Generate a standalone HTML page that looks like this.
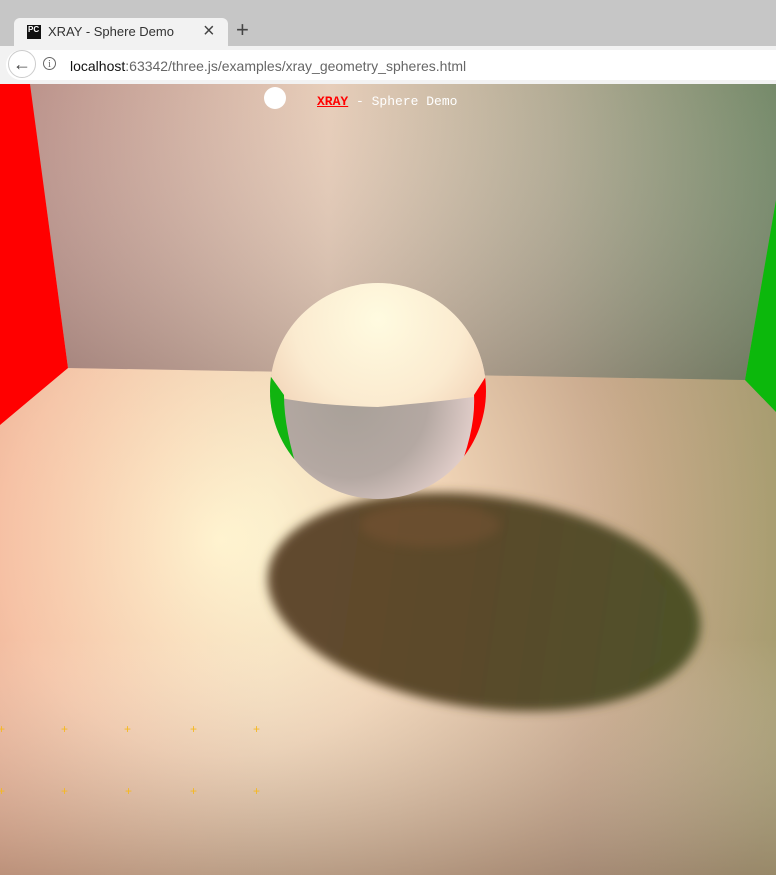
<!DOCTYPE html>
<html><head><meta charset="utf-8"><style>
html,body{margin:0;padding:0;width:776px;height:875px;overflow:hidden;background:#c6c6c6;font-family:"Liberation Sans",sans-serif}
#top{position:absolute;left:0;top:0;width:776px;height:46px;background:#c6c6c6}
#tab{position:absolute;left:14px;top:18px;width:214px;height:28px;background:#f2f2f2;border-radius:6px 6px 0 0}
#tab .ic{position:absolute;left:13px;top:7px;width:14px;height:14px;background:#111;color:#fff;font-size:8px;font-weight:bold;line-height:9px;padding-left:1px;box-sizing:border-box}
#tab .t{position:absolute;left:34px;top:6px;font-size:13px;color:#333}
#tab .x{position:absolute;left:189px;top:2px;font-size:20px;color:#444}
#plus{position:absolute;left:236px;top:17px;font-size:22px;color:#444}
#bar{position:absolute;left:0;top:46px;width:776px;height:38px;background:#f2f2f2}
#omni{position:absolute;left:6px;top:4px;width:770px;height:30px;background:#fff;border-radius:15px 0 0 15px}
#back{position:absolute;left:8px;top:50px;width:28px;height:28px;border-radius:50%;border:1px solid #ccc;background:#fff;text-align:center;line-height:26px;font-size:18px;font-weight:bold;color:#444;box-sizing:border-box}
#info{position:absolute;left:43px;top:57px;width:13px;height:13px;border:1px solid #666;border-radius:50%;font-size:10px;line-height:13px;text-align:center;color:#666;box-sizing:border-box;font-family:"Liberation Serif",serif}
#url{position:absolute;left:70px;top:58px;font-size:14px;color:#666}
#url b{font-weight:normal;color:#111}
svg{position:absolute;left:0;top:84px}
#title{position:absolute;left:317px;top:94px;font-family:"Liberation Mono",monospace;font-size:13px;color:#fff}
#title span{color:#f00;font-weight:bold;text-decoration:underline}
</style></head><body>
<div id="top"><div id="tab"><div class="ic">PC</div><div class="t">XRAY - Sphere Demo</div><div class="x">×</div></div><div id="plus">+</div></div>
<div id="bar"><div id="omni"></div></div>
<div id="back">←</div><div id="info">i</div>
<div id="url"><b>localhost</b>:63342/three.js/examples/xray_geometry_spheres.html</div>
<svg width="776" height="791" viewBox="0 84 776 791">
<defs>
<linearGradient id="wall" x1="0" x2="1" y1="0" y2="0">
<stop offset="0" stop-color="#b88e86"/><stop offset="0.4" stop-color="#e6cbb6"/><stop offset="0.7" stop-color="#b0a890"/><stop offset="1" stop-color="#6e8462"/></linearGradient>
<linearGradient id="wallv" x1="0" x2="0" y1="0" y2="1">
<stop offset="0" stop-color="#fff" stop-opacity="0.05"/><stop offset="1" stop-color="#6a5a58" stop-opacity="0.3"/></linearGradient>
<radialGradient id="floor" gradientUnits="userSpaceOnUse" cx="220" cy="540" r="620">
<stop offset="0" stop-color="#fff8d4"/><stop offset="0.35" stop-color="#f2d6b8"/><stop offset="0.7" stop-color="#c4a488"/><stop offset="1" stop-color="#9c8470"/></radialGradient>
<linearGradient id="floorl" x1="0" x2="1" y1="0" y2="0">
<stop offset="0" stop-color="#ff9a80" stop-opacity="0.35"/><stop offset="0.35" stop-color="#ffb090" stop-opacity="0"/><stop offset="0.75" stop-color="#d8d090" stop-opacity="0"/><stop offset="1" stop-color="#a8b068" stop-opacity="0.45"/></linearGradient>
<linearGradient id="floorb" x1="0" x2="0" y1="0" y2="1">
<stop offset="0" stop-color="#fff" stop-opacity="0"/><stop offset="0.7" stop-color="#fff" stop-opacity="0"/><stop offset="1" stop-color="#8a7262" stop-opacity="0.4"/></linearGradient>
<linearGradient id="shadow" x1="0" x2="1" y1="0" y2="0">
<stop offset="0" stop-color="#62482e"/><stop offset="0.5" stop-color="#5a4a2a"/><stop offset="1" stop-color="#4e5228"/></linearGradient>
<radialGradient id="sTop" gradientUnits="userSpaceOnUse" cx="378" cy="320" r="140">
<stop offset="0" stop-color="#fffbe0"/><stop offset="0.6" stop-color="#fbebd0"/><stop offset="1" stop-color="#f0d0b4"/></radialGradient>
<radialGradient id="sBot" gradientUnits="userSpaceOnUse" cx="350" cy="400" r="130">
<stop offset="0" stop-color="#a8a098"/><stop offset="0.6" stop-color="#b4a8a2"/><stop offset="1" stop-color="#e4d0cc"/></radialGradient>
<clipPath id="sc"><circle cx="378" cy="391" r="108"/></clipPath>
<filter id="bl" x="-20%" y="-20%" width="140%" height="140%"><feGaussianBlur stdDeviation="5"/></filter>
</defs>
<rect x="0" y="84" width="776" height="791" fill="url(#floor)"/>
<rect x="0" y="84" width="776" height="791" fill="url(#floorl)"/>
<rect x="0" y="84" width="776" height="791" fill="url(#floorb)"/>
<polygon points="30,84 776,84 776,200 745,380 68,368" fill="url(#wall)"/>
<polygon points="30,84 776,84 776,200 745,380 68,368" fill="url(#wallv)"/>
<polygon points="0,84 30,84 68,368 0,425" fill="#ff0000"/>
<polygon points="776,200 745,380 776,412" fill="#0cb80c"/>
<ellipse cx="484" cy="602" rx="218" ry="106" fill="url(#shadow)" filter="url(#bl)" transform="rotate(8 484 602)"/>
<ellipse cx="430" cy="525" rx="70" ry="22" fill="#8a5a3a" opacity="0.3" filter="url(#bl)"/>
<g clip-path="url(#sc)">
<rect x="260" y="280" width="240" height="230" fill="url(#sBot)"/>
<path d="M260,280 H500 V392 Q480,398 378,407 Q290,404 260,392 Z" fill="url(#sTop)"/>
<path d="M266,370 Q268,440 300,478 Q284,430 284,395 Z" fill="#10b410"/>
<path d="M490,370 Q488,440 456,478 Q476,430 474,395 Z" fill="#f00"/>
</g>
<circle cx="275" cy="98" r="11" fill="#fff"/>
<g fill="#f5b820" font-family="Liberation Sans" font-size="12">
<text x="-2" y="733">+</text><text x="61" y="733">+</text><text x="124" y="733">+</text><text x="190" y="733">+</text><text x="253" y="733">+</text>
<text x="-2" y="795">+</text><text x="61" y="795">+</text><text x="125" y="795">+</text><text x="190" y="795">+</text><text x="253" y="795">+</text>
</g>
</svg>
<div id="title"><span>XRAY</span> - Sphere Demo</div>
</body></html>
